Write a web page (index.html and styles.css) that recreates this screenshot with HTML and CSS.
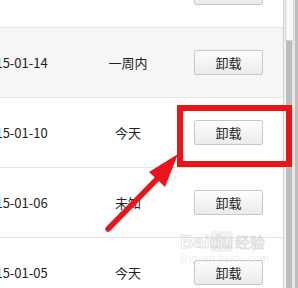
FILE: index.html
```html
<!DOCTYPE html>
<html lang="zh-CN">
<head>
<meta charset="utf-8">
<link rel="stylesheet" href="styles.css">
</head>
<body>
<div class="page">
  <div class="table">
    <div class="row">
      <span class="date"></span>
      <span class="status"></span>
      <span class="action"><button class="btn">卸载</button></span>
    </div>
    <div class="row hover">
      <span class="date">2015-01-14</span>
      <span class="status">一周内</span>
      <span class="action"><button class="btn">卸载</button></span>
    </div>
    <div class="row">
      <span class="date">2015-01-10</span>
      <span class="status">今天</span>
      <span class="action"><button class="btn">卸载</button></span>
    </div>
    <div class="row">
      <span class="date">2015-01-06</span>
      <span class="status">未知</span>
      <span class="action"><button class="btn">卸载</button></span>
    </div>
    <div class="row">
      <span class="date">2015-01-05</span>
      <span class="status">今天</span>
      <span class="action"><button class="btn">卸载</button></span>
    </div>
  </div>
  <div class="scrollbar"><div class="thumb"></div></div>
</div>
<div class="highlight"></div>
<svg class="arrow" width="298" height="288" viewBox="0 0 298 288">
  <line x1="108" y1="229" x2="159" y2="177" stroke="#e8161a" stroke-width="5.5" stroke-linecap="round"/>
  <polygon points="178,154 149,172 165,187" fill="#e8161a"/>
</svg>
<div class="watermark">
  <div class="wm-main">Bai<span class="wm-du">du</span><span class="wm-cn">经验</span></div>
  <div class="wm-sub">jingyan.baidu.com</div>
</div>
</body>
</html>
```
FILE: styles.css
```css
html, body {
  margin: 0;
  padding: 0;
  width: 298px;
  height: 288px;
  overflow: hidden;
  background: #fff;
  font-family: "Noto Sans CJK SC", "Noto Sans", sans-serif;
  color: #222;
}
.page {
  display: flex;
  height: 288px;
}
.table {
  flex: 1;
  margin-top: -42px;
  overflow: hidden;
}
.row {
  display: grid;
  grid-template-columns: 106px 82px 1fr;
  align-items: center;
  height: 69px;
  margin-left: -19px;
  border-bottom: 1px solid #e4e4e4;
  font-size: 13px;
}
.row.hover {
  background: #f6f6f6;
}
.date {
  white-space: nowrap;
}
.status {
  text-align: center;
}
.action {
  padding-left: 25px;
}
.btn {
  width: 69px;
  height: 25px;
  border: 1px solid #c8c8c8;
  border-radius: 2px;
  background: linear-gradient(#fdfdfd, #ebebeb);
  font-family: "Noto Sans CJK SC", sans-serif;
  font-size: 13px;
  color: #222;
  padding: 0;
  display: block;
}
.scrollbar {
  width: 15px;
  height: 288px;
  border-left: 1px solid #cfcfcf;
  box-sizing: border-box;
  background: linear-gradient(90deg, #f2f2f2 0, #f2f2f2 2px, #bdbdbd 2px, #bdbdbd 8px, #e6e6e6 8px, #e6e6e6 11px, #bdbdbd 11px);
}
.thumb {
  margin-left: 1px;
  width: 9px;
  height: 41px;
  background: #f8f8f8;
  border: 1px solid #d4d4d4;
  border-top: none;
  box-sizing: border-box;
}
.highlight {
  position: absolute;
  left: 177px;
  top: 105px;
  width: 115px;
  height: 62px;
  border: 6px solid #e8161a;
  box-sizing: border-box;
}
.arrow {
  position: absolute;
  left: 0;
  top: 0;
}
.watermark {
  position: absolute;
  left: 180px;
  top: 232px;
  pointer-events: none;
}
.wm-main {
  font-family: "Liberation Sans", sans-serif;
  font-size: 19px;
  font-weight: bold;
  line-height: 20px;
  color: transparent;
  -webkit-text-stroke: 1px rgba(190, 190, 190, 0.45);
  white-space: nowrap;
}
.wm-du {
  background: rgba(215, 215, 215, 0.35);
  border-radius: 4px;
}
.wm-cn {
  font-family: "Noto Sans CJK SC", sans-serif;
  font-size: 15px;
  font-weight: normal;
  margin-left: 2px;
}
.wm-sub {
  font-family: "Liberation Sans", sans-serif;
  font-size: 11px;
  line-height: 12px;
  color: rgba(200, 200, 200, 0.3);
  white-space: nowrap;
}
```
